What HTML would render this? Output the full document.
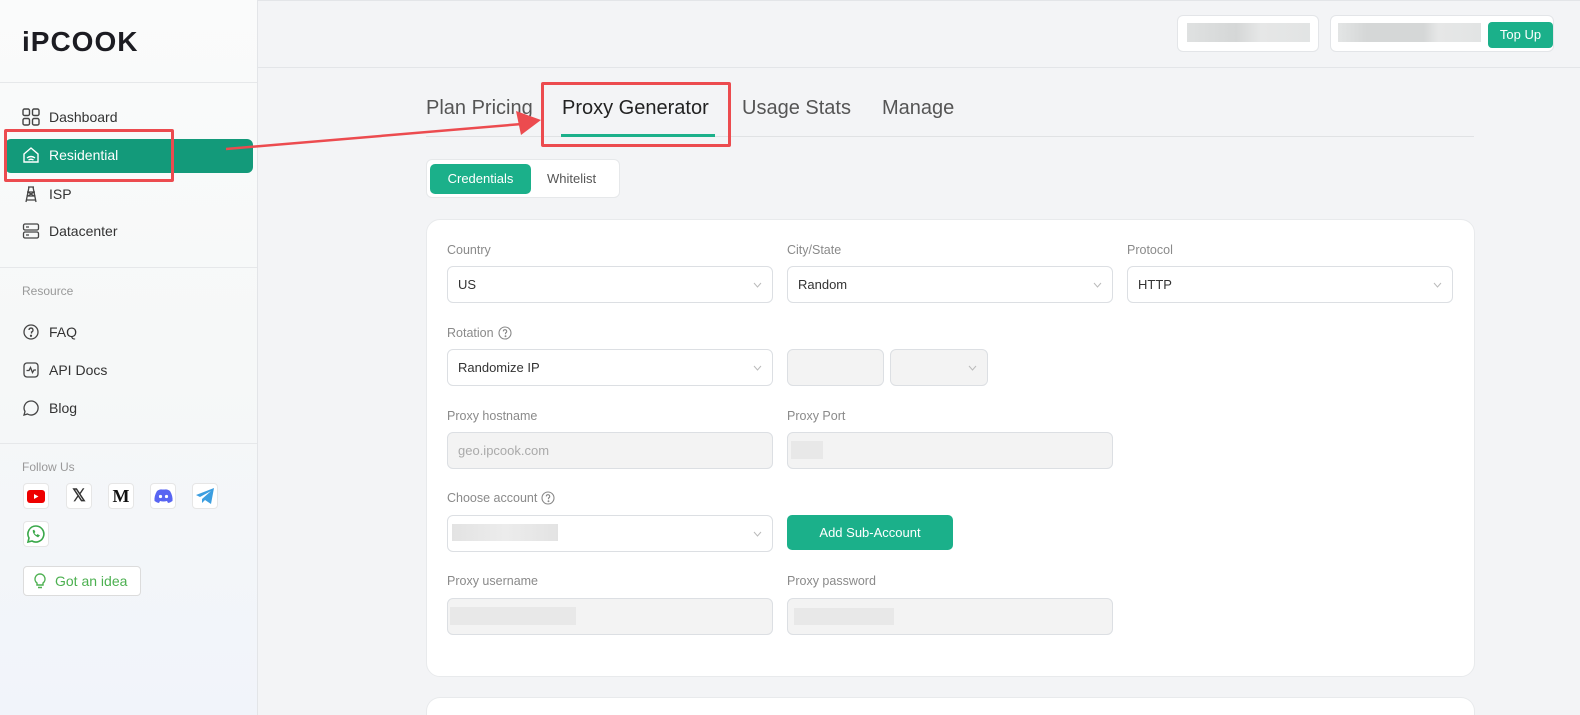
<!DOCTYPE html>
<html style="height:715px;overflow:hidden"><head><meta charset="utf-8"><style>
*{box-sizing:border-box;margin:0;padding:0}
body{width:1580px;height:715px;overflow:hidden;font-family:"Liberation Sans",sans-serif;background:#f3f4f6;position:relative;color:#333}
.a{position:absolute}
.side{left:0;top:0;width:258px;height:715px;background:linear-gradient(180deg,#fafbfb 0%,#f6f8f8 50%,#f1f4fa 100%);border-right:1px solid #e3e5e8}
.hr{height:1px;background:#e6e8ea;left:0;width:257px}
.nav{left:22px;font-size:14px;color:#333;display:flex;align-items:center;gap:9px}
.nav svg{width:18px;height:18px}
.lab{font-size:12px;color:#999}
.card{background:#fff;border:1px solid #e8eaec;border-radius:14px}
.fl{font-size:12.5px;color:#8a8a8a}
.in{border:1px solid #dcdfe3;border-radius:6px;background:#fff;font-size:13px;color:#333;padding-left:10px;display:flex;align-items:center}
.in.d{background:#f3f3f3}
.chev{position:absolute;right:10px;top:13px;width:9px;height:9px}
.blur{background:#e6e7e8;position:absolute}
.soc{width:26px;height:26px;background:#fff;border:1px solid #e6e6e6;border-radius:4px;display:flex;align-items:center;justify-content:center}
.tab{font-size:20px;color:#555;top:97px}
</style></head><body>
<div class="a side"></div>
<div class="a" style="left:22px;top:26px;font-size:28px;font-weight:bold;color:#1c1c22;letter-spacing:1px">iPCOOK</div>
<div class="a hr" style="top:82px"></div>
<div class="a nav" style="top:108px"><svg viewBox="0 0 18 18" fill="none" stroke="#444" stroke-width="1.4"><rect x="1" y="1" width="6.5" height="6.5" rx="1.5"/><rect x="10.5" y="1" width="6.5" height="6.5" rx="1.5"/><rect x="1" y="10.5" width="6.5" height="6.5" rx="1.5"/><rect x="10.5" y="10.5" width="6.5" height="6.5" rx="1.5"/></svg>Dashboard</div>
<div class="a" style="left:5px;top:139px;width:248px;height:34px;background:#139a7a;border-radius:6px"></div>
<div class="a nav" style="top:146px;color:#fff"><svg viewBox="0 0 18 18" fill="none" stroke="#fff" stroke-width="1.4"><path d="M2 8 9 2l7 6v8H2z"/><path d="M5 12q4-3 8 0M6.5 14q2.5-1.5 5 0"/></svg>Residential</div>
<div class="a nav" style="top:185px"><svg viewBox="0 0 18 18" fill="none" stroke="#444" stroke-width="1.3"><path d="M6 2h6M7 2 4 17M11 2l3 15M5 7h8M4.5 11h9M4 15h10M6 7l6 4M12 7l-6 4"/></svg>ISP</div>
<div class="a nav" style="top:222px"><svg viewBox="0 0 18 18" fill="none" stroke="#444" stroke-width="1.3"><rect x="1.5" y="2" width="15" height="6" rx="1.5"/><rect x="1.5" y="10" width="15" height="6" rx="1.5"/><path d="M4 5h3M4 13h3"/></svg>Datacenter</div>
<div class="a hr" style="top:267px"></div>
<div class="a lab" style="left:22px;top:284px">Resource</div>
<div class="a nav" style="top:323px"><svg viewBox="0 0 18 18" fill="none" stroke="#444" stroke-width="1.3"><circle cx="9" cy="9" r="7"/><path d="M7 7a2 2 0 1 1 2.5 2v1.5"/><circle cx="9" cy="12.8" r=".5" fill="#444"/></svg>FAQ</div>
<div class="a nav" style="top:361px"><svg viewBox="0 0 18 18" fill="none" stroke="#444" stroke-width="1.3"><rect x="2" y="2" width="14" height="14" rx="3"/><path d="M4.5 9.5h2.5l1.5-3 2 5 1.5-2.5h2"/></svg>API Docs</div>
<div class="a nav" style="top:399px"><svg viewBox="0 0 18 18" fill="none" stroke="#444" stroke-width="1.3"><path d="M9 2a7 7 0 1 1-3.5 13L2 16l1-3.5A7 7 0 0 1 9 2z"/><path d="M6 9h.01M9 9h.01M12 9h.01" stroke-width="1.8"/></svg>Blog</div>
<div class="a hr" style="top:443px"></div>
<div class="a lab" style="left:22px;top:460px">Follow Us</div>
<div class="a soc" style="left:23px;top:483px"><svg width="18" height="13" viewBox="0 0 18 13"><rect width="18" height="13" rx="3" fill="#e00"/><path d="M7 4v5l4.5-2.5z" fill="#fff"/></svg></div>
<div class="a soc" style="left:66px;top:483px;font-size:17px;font-weight:bold;font-family:'Liberation Serif',serif">𝕏</div>
<div class="a soc" style="left:108px;top:483px;font-size:18px;font-weight:bold;font-family:'Liberation Serif',serif;color:#111">M</div>
<div class="a soc" style="left:150px;top:483px"><svg width="19" height="14" viewBox="0 0 19 14"><path d="M3 2q3-2 5-1.5h3Q13 0 16 2q3 5 2.5 10-2 1.5-4.5 2l-1-2q-3.5 1-7 0L5 14Q2.5 13.5.5 12 0 7 3 2z" fill="#5865f2"/><circle cx="6.5" cy="7.5" r="1.6" fill="#fff"/><circle cx="12.5" cy="7.5" r="1.6" fill="#fff"/></svg></div>
<div class="a soc" style="left:192px;top:483px"><svg width="20" height="18" viewBox="0 0 20 18"><path d="M1 8 19 1l-3 16-6-4-3 3v-4l9-8-11 6z" fill="#3c9ee0"/></svg></div>
<div class="a soc" style="left:23px;top:521px"><svg width="20" height="20" viewBox="0 0 20 20" fill="none" stroke="#3aa84a" stroke-width="1.6"><path d="M10 2a8 8 0 1 1-4 15l-4 1 1-4A8 8 0 0 1 10 2z"/><path d="M7 6.5q0 4 5 6.5l1.5-1.5-2-1-1 1q-2-1-2.5-2.5l1-1-1-2z" fill="#3aa84a" stroke-width=".6"/></svg></div>
<div class="a" style="left:23px;top:566px;width:118px;height:30px;border:1px solid #dcdcdc;border-radius:4px;background:#fff;color:#4cb050;font-size:14px;display:flex;align-items:center;padding-left:9px;gap:8px"><svg width="14" height="16" viewBox="0 0 14 16" fill="none" stroke="#4cb050" stroke-width="1.4"><path d="M7 1a5 5 0 0 0-3 9v2h6v-2a5 5 0 0 0-3-9zM5 14.5h4"/></svg>Got an idea</div>

<div class="a" style="left:258px;top:0;width:1322px;height:68px;border-bottom:1px solid #e3e5e8;border-top:1px solid #e3e5e8"></div>
<div class="a" style="left:1177px;top:15px;width:142px;height:37px;background:#fff;border:1px solid #e3e5e8;border-radius:6px"><div class="blur" style="left:9px;top:7px;width:123px;height:19px;background:linear-gradient(90deg,#dfe1e1 0,#d5d7d7 40%,#e6e7e7 60%,#e2e4e4 100%)"></div></div>
<div class="a" style="left:1330px;top:15px;width:224px;height:37px;background:#fff;border:1px solid #e3e5e8;border-radius:6px"><div class="blur" style="left:7px;top:7px;width:143px;height:19px;background:linear-gradient(90deg,#e3e5e5 0,#d5d7d7 20%,#d5d7d7 60%,#e6e7e7 70%,#e2e4e4 100%)"></div><div style="position:absolute;left:157px;top:6px;width:65px;height:26px;background:#1bb08a;border-radius:4px;color:#fff;font-size:13px;text-align:center;line-height:26px">Top Up</div></div>

<div class="a tab" style="left:426px">Plan Pricing</div>
<div class="a tab" style="left:562px;color:#222">Proxy Generator</div>
<div class="a tab" style="left:742px">Usage Stats</div>
<div class="a tab" style="left:882px">Manage</div>
<div class="a" style="left:426px;top:136px;width:1048px;height:1px;background:#e0e2e4"></div>
<div class="a" style="left:561px;top:134px;width:154px;height:3px;background:#1bb08a"></div>

<div class="a" style="left:426px;top:159px;width:194px;height:39px;background:#fff;border:1px solid #e6e8ea;border-radius:6px"></div>
<div class="a" style="left:430px;top:164px;width:101px;height:30px;background:#1bb08a;border-radius:5px;color:#fff;font-size:13px;text-align:center;line-height:30px">Credentials</div>
<div class="a" style="left:547px;top:171px;font-size:13px;color:#555">Whitelist</div>

<div class="a card" style="left:426px;top:219px;width:1049px;height:458px"></div>
<div class="a card" style="left:426px;top:697px;width:1049px;height:18px;border-bottom:none;border-radius:14px 14px 0 0"></div>

<div class="a fl" style="left:447px;top:243px">Country</div>
<div class="a fl" style="left:787px;top:243px">City/State</div>
<div class="a fl" style="left:1127px;top:243px">Protocol</div>
<div class="a in" style="left:447px;top:266px;width:326px;height:37px">US<svg class="chev" viewBox="0 0 9 9" fill="none" stroke="#bbb"><path d="M1 3l3.5 4L8 3"/></svg></div>
<div class="a in" style="left:787px;top:266px;width:326px;height:37px">Random<svg class="chev" viewBox="0 0 9 9" fill="none" stroke="#bbb"><path d="M1 3l3.5 4L8 3"/></svg></div>
<div class="a in" style="left:1127px;top:266px;width:326px;height:37px">HTTP<svg class="chev" viewBox="0 0 9 9" fill="none" stroke="#bbb"><path d="M1 3l3.5 4L8 3"/></svg></div>

<div class="a fl" style="left:447px;top:326px;display:flex;align-items:center;gap:4px">Rotation <svg width="14" height="14" viewBox="0 0 14 14" fill="none" stroke="#888" stroke-width="1.1"><circle cx="7" cy="7" r="6"/><path d="M5.3 5.4a1.7 1.7 0 1 1 2.2 1.6v1.2"/><circle cx="7.5" cy="10.2" r=".4" fill="#888"/></svg></div>
<div class="a in" style="left:447px;top:349px;width:326px;height:37px">Randomize IP<svg class="chev" viewBox="0 0 9 9" fill="none" stroke="#bbb"><path d="M1 3l3.5 4L8 3"/></svg></div>
<div class="a in d" style="left:787px;top:349px;width:97px;height:37px"></div>
<div class="a in d" style="left:890px;top:349px;width:98px;height:37px"><svg class="chev" viewBox="0 0 9 9" fill="none" stroke="#bbb"><path d="M1 3l3.5 4L8 3"/></svg></div>

<div class="a fl" style="left:447px;top:409px">Proxy hostname</div>
<div class="a fl" style="left:787px;top:409px">Proxy Port</div>
<div class="a in d" style="left:447px;top:432px;width:326px;height:37px;color:#aaa">geo.ipcook.com</div>
<div class="a in d" style="left:787px;top:432px;width:326px;height:37px"><div class="blur" style="left:3px;top:8px;width:32px;height:18px;background:#e8e8e8"></div></div>

<div class="a fl" style="left:447px;top:491px;display:flex;align-items:center;gap:4px">Choose account <svg width="14" height="14" viewBox="0 0 14 14" fill="none" stroke="#888" stroke-width="1.1"><circle cx="7" cy="7" r="6"/><path d="M5.3 5.4a1.7 1.7 0 1 1 2.2 1.6v1.2"/><circle cx="7.5" cy="10.2" r=".4" fill="#888"/></svg></div>
<div class="a in" style="left:447px;top:515px;width:326px;height:37px"><div class="blur" style="left:4px;top:8px;width:106px;height:17px;background:linear-gradient(90deg,#e3e3e3,#ececec 50%,#e3e3e3)"></div><svg class="chev" viewBox="0 0 9 9" fill="none" stroke="#bbb"><path d="M1 3l3.5 4L8 3"/></svg></div>
<div class="a" style="left:787px;top:515px;width:166px;height:35px;background:#1bb08a;border-radius:5px;color:#fff;font-size:13px;text-align:center;line-height:35px">Add Sub-Account</div>

<div class="a fl" style="left:447px;top:574px">Proxy username</div>
<div class="a fl" style="left:787px;top:574px">Proxy password</div>
<div class="a in d" style="left:447px;top:598px;width:326px;height:37px"><div class="blur" style="left:2px;top:8px;width:126px;height:18px;background:#e8e8e8"></div></div>
<div class="a in d" style="left:787px;top:598px;width:326px;height:37px"><div class="blur" style="left:6px;top:9px;width:100px;height:17px;background:#e8e8e8"></div></div>

<div class="a" style="left:4px;top:129px;width:170px;height:53px;border:3px solid #ec4b4f;border-radius:2px"></div>
<div class="a" style="left:541px;top:82px;width:190px;height:65px;border:3px solid #ec4b4f;border-radius:2px"></div>
<svg class="a" style="left:0;top:0" width="1580" height="715"><path d="M226 149 522 124" stroke="#ec4b4f" stroke-width="2.5"/><path d="M541 120 516 111 521 135z" fill="#ec4b4f"/></svg>
</body></html>
